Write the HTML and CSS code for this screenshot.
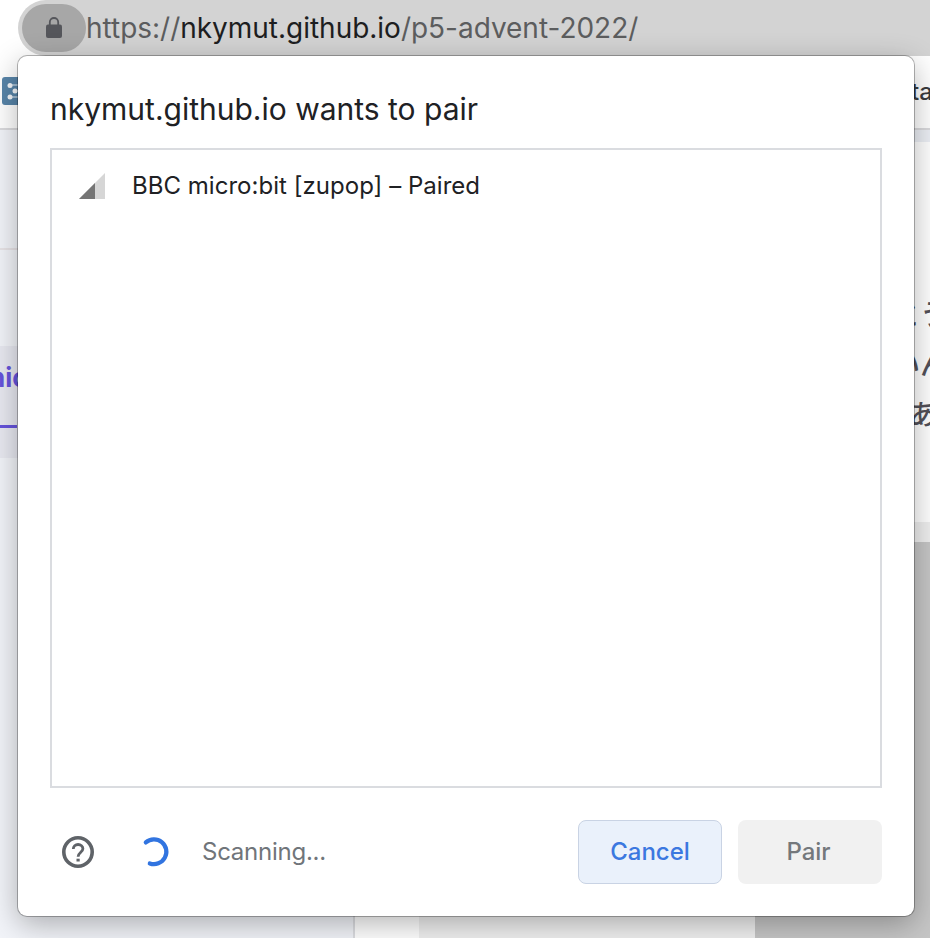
FILE: index.html
```html
<!DOCTYPE html>
<html lang="en">
<head>
<meta charset="utf-8">
<title>nkymut.github.io wants to pair</title>
<link rel="stylesheet" href="styles.css">
</head>
<body>
<div class="browser">
  <header class="toolbar">
    <div class="omnibox">
      <span class="site-info">
        <svg width="16" height="22" viewBox="0 0 16 22"><path d="M3.8 9V5.2a4.2 4.2 0 0 1 8.4 0V9" fill="none" stroke="#55565b" stroke-width="1.8"/><rect x="0" y="7.5" width="16" height="13.5" rx="2" fill="#55565b"/></svg>
      </span>
      <span class="url">https://<b>nkymut.github.io</b>/p5-advent-2022/</span>
    </div>
  </header>
  <nav class="bookmarks">
    <svg class="bookmark-icon" width="28" height="28" viewBox="0 0 28 28"><rect width="28" height="28" rx="3" fill="#5885a9"/><path d="M8 8h14M13 14h10M8 20h14" stroke="#b9cddd" stroke-width="1.6"/><g fill="#f4f7fa"><circle cx="8" cy="8.5" r="2.5"/><circle cx="13" cy="14" r="2.5"/><circle cx="8" cy="20" r="2.5"/></g></svg>
    <span class="bookmark-label">ta</span>
  </nav>
  <div class="page">
    <aside class="sidebar">
      <div class="side-top"></div>
      <div class="side-gap"></div>
      <div class="side-active"><span class="side-word">nic</span></div>
    </aside>
    <main class="content">
      <section class="article">
        <p>とう</p>
        <p>いん</p>
        <p class="last">あ</p>
      </section>
      <div class="divider"></div>
      <div class="preview"><div class="gutter"></div><div class="canvas"></div><div class="backdrop"></div></div>
    </main>
  </div>
</div>
<div class="dialog">
  <h1 class="title">nkymut.github.io wants to pair</h1>
  <div class="devices">
    <div class="device">
      <svg width="28" height="28" viewBox="0 0 28 28"><path d="M1 27L27 1v26z" fill="#d6d6d6"/><path d="M1 27L17 11v16z" fill="#757575"/></svg>
      <span class="device-name">BBC micro:bit [zupop] – Paired</span>
    </div>
  </div>
  <footer class="actions">
    <svg class="help" width="32" height="32" viewBox="0 0 32 32"><circle cx="16" cy="16" r="14.2" fill="none" stroke="#5f6368" stroke-width="3.6"/><path d="M11.3 13c0-2.6 2.1-4.5 4.8-4.5s4.8 1.8 4.8 4.3c0 3.2-4.8 3.8-4.8 8" fill="none" stroke="#5f6368" stroke-width="2.8"/><rect x="14.5" y="22.7" width="3.2" height="2.8" fill="#5f6368"/></svg>
    <svg class="spinner" width="28" height="32" viewBox="0 0 28 32"><path d="M3.8 6.4A12.4 12.4 0 1 1 7.8 27.4" fill="none" stroke="#3174e0" stroke-width="4.2" stroke-linecap="round"/></svg>
    <span class="status">Scanning...</span>
    <button class="btn cancel">Cancel</button>
    <button class="btn pair" disabled>Pair</button>
  </footer>
</div>
</body>
</html>
```
FILE: styles.css
```css
* { box-sizing: border-box; }
body {
  margin: 0;
  width: 930px;
  height: 938px;
  position: relative;
  overflow: hidden;
  background: #fff;
  font-family: Inter, "Noto Sans CJK JP", sans-serif;
}
.browser { height: 938px; display: flex; flex-direction: column; }
.toolbar { height: 56px; flex: none; padding-left: 18px; }
.omnibox {
  height: 56px;
  padding-left: 4px;
  display: flex;
  align-items: center;
  background: #d3d3d3;
  border-radius: 28px 0 0 28px;
}
.site-info {
  width: 64px;
  height: 48px;
  flex: none;
  border-radius: 24px;
  background: #a7a7a7;
  display: flex;
  align-items: center;
  justify-content: center;
}
.url { font-size: 28px; letter-spacing: -0.02px; color: #5c5d5e; white-space: nowrap; line-height: 56px; }
.url b { font-weight: 400; color: #1d1e21; }
.bookmarks {
  height: 74px;
  flex: none;
  display: flex;
  justify-content: space-between;
  align-items: center;
  padding: 0 0 2px 2px;
  border-bottom: 2px solid #dadadd;
}
.bookmark-label { font-size: 24px; font-weight: 500; color: #3a3b3e; width: 19px; }
.page { flex: 1; display: flex; min-height: 0; }
.sidebar { width: 355px; border-right: 2px solid #dcdde1; background: #f2f4f9; }
.side-top { height: 120px; border-bottom: 2px solid #e7e3e6; }
.side-gap { height: 96px; }
.side-active { height: 112px; background: #e8e9f1; padding-top: 14px; overflow: hidden; }
.side-word {
  display: block;
  width: 17px;
  height: 68px;
  border-bottom: 3px solid #6654dc;
  color: #6654dc;
  font-weight: 700;
  font-size: 26px;
  line-height: 36px;
  text-indent: -11px;
}
.content { flex: 1; display: flex; flex-direction: column; background: #fff; border-top: 12px solid #eceff5; overflow: hidden; }
.article {
  height: 380px;
  padding-top: 146px;
  text-align: right;
  color: #535159;
  font-family: "Noto Sans CJK JP", sans-serif;
  font-size: 28px;
  font-weight: 500;
  white-space: nowrap;
}
.article p { margin: 0 -18px 0 0; height: 50px; line-height: 50px; }
.article .last { margin-right: -7px; }
.divider { height: 20px; background: #efefef; }
.preview { flex: 1; display: flex; }
.gutter { width: 64px; }
.canvas { width: 336px; background: #f0f0f0; }
.backdrop { flex: 1; background: #c6c6c6; }
.dialog {
  position: absolute;
  left: 18px;
  top: 56px;
  width: 896px;
  height: 860px;
  padding: 32px;
  display: flex;
  flex-direction: column;
  background: #fff;
  border-radius: 9px;
  box-shadow: 0 0 0 1px rgba(0,0,0,.28), 0 8px 30px rgba(0,0,0,.3);
}
.title { margin: 0; height: 60px; font-size: 30px; font-weight: 400; line-height: 43px; color: #202124; white-space: nowrap; }
.devices { height: 640px; border: 2px solid #dadce0; padding: 22px 26px; }
.device { display: flex; align-items: center; height: 28px; }
.device-name { margin-left: 26px; padding-bottom: 2px; font-size: 24px; letter-spacing: 0.03px; color: #202124; white-space: nowrap; }
.actions { height: 64px; margin-top: 32px; display: flex; align-items: center; }
.help { margin-left: 12px; }
.spinner { margin-left: 48px; }
.status { margin-left: 32px; margin-right: auto; padding-bottom: 2px; font-size: 24px; letter-spacing: -0.25px; color: #70757a; }
.btn { width: 144px; height: 64px; border-radius: 8px; border: 0; padding: 0 0 2px; font: 500 24px Inter, sans-serif; }
.cancel { background: #eaf1fb; border: 1px solid #c9d3e4; color: #3b78e0; }
.pair { margin-left: 16px; padding-right: 3px; background: #f1f1f1; color: #74787c; }
```
